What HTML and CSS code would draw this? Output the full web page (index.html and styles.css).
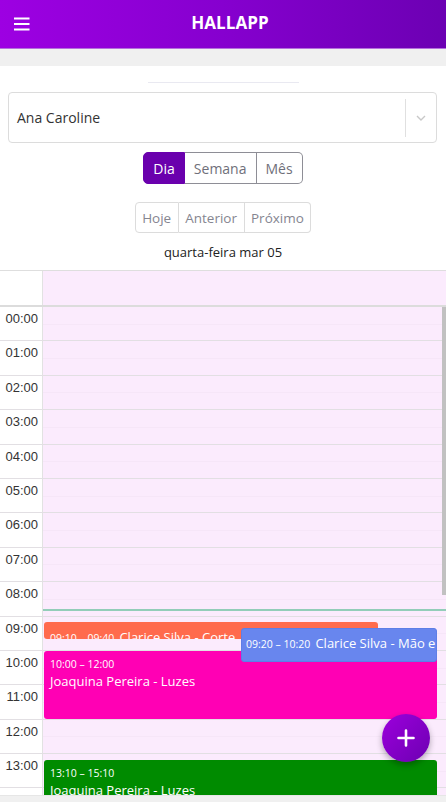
FILE: index.html
```html
<!DOCTYPE html>
<html lang="pt">
<head>
<meta charset="utf-8">
<title>HALLAPP</title>
<link rel="stylesheet" href="styles.css">
</head>
<body>
<div class="app">
  <header class="topbar">
    <button class="menu-btn" aria-label="menu">
      <svg width="16" height="14" viewBox="0 0 16 14"><rect x="0" y="0.5" width="15.5" height="2" fill="#fff"/><rect x="0" y="6" width="15.5" height="2" fill="#fff"/><rect x="0" y="11.5" width="15.5" height="2" fill="#fff"/></svg>
    </button>
    <h1 class="title">HALLAPP</h1>
  </header>
  <div class="gap-band"></div>
  <main class="content">
    <div class="tabs-line"></div>
    <div class="select">
      <span class="select-value">Ana Caroline</span>
      <span class="select-sep"></span>
      <span class="select-arrow"><svg width="10" height="6" viewBox="0 0 10 6"><path d="M1 1 L5 5 L9 1" fill="none" stroke="#c8c8c8" stroke-width="1.4"/></svg></span>
    </div>
    <div class="btn-group view-group">
      <button class="btn active">Dia</button>
      <button class="btn">Semana</button>
      <button class="btn">Mês</button>
    </div>
    <div class="btn-group nav-group">
      <button class="btn">Hoje</button>
      <button class="btn">Anterior</button>
      <button class="btn">Próximo</button>
    </div>
    <div class="date-label">quarta-feira mar 05</div>
    <section class="calendar">
      <div class="allday-row"><div class="axis-cell"></div><div class="allday-cell"></div></div>
      <div class="divider"></div>
      <div class="scroller">
        <div class="timegrid">
          <div class="hour-row"><div class="hour-label">00:00</div><div class="hour-slot"></div></div>
          <div class="hour-row"><div class="hour-label">01:00</div><div class="hour-slot"></div></div>
          <div class="hour-row"><div class="hour-label">02:00</div><div class="hour-slot"></div></div>
          <div class="hour-row"><div class="hour-label">03:00</div><div class="hour-slot"></div></div>
          <div class="hour-row"><div class="hour-label">04:00</div><div class="hour-slot"></div></div>
          <div class="hour-row"><div class="hour-label">05:00</div><div class="hour-slot"></div></div>
          <div class="hour-row"><div class="hour-label">06:00</div><div class="hour-slot"></div></div>
          <div class="hour-row"><div class="hour-label">07:00</div><div class="hour-slot"></div></div>
          <div class="hour-row"><div class="hour-label">08:00</div><div class="hour-slot"></div></div>
          <div class="hour-row"><div class="hour-label">09:00</div><div class="hour-slot"></div></div>
          <div class="hour-row"><div class="hour-label">10:00</div><div class="hour-slot"></div></div>
          <div class="hour-row"><div class="hour-label">11:00</div><div class="hour-slot"></div></div>
          <div class="hour-row"><div class="hour-label">12:00</div><div class="hour-slot"></div></div>
          <div class="hour-row"><div class="hour-label">13:00</div><div class="hour-slot"></div></div>
          <div class="hour-row"><div class="hour-label">14:00</div><div class="hour-slot"></div></div>
          <div class="hour-row"><div class="hour-label">15:00</div><div class="hour-slot"></div></div>
          <div class="hour-row"><div class="hour-label">16:00</div><div class="hour-slot"></div></div>
          <div class="hour-row"><div class="hour-label">17:00</div><div class="hour-slot"></div></div>
          <div class="hour-row"><div class="hour-label">18:00</div><div class="hour-slot"></div></div>
          <div class="hour-row"><div class="hour-label">19:00</div><div class="hour-slot"></div></div>
          <div class="hour-row"><div class="hour-label">20:00</div><div class="hour-slot"></div></div>
          <div class="hour-row"><div class="hour-label">21:00</div><div class="hour-slot"></div></div>
          <div class="hour-row"><div class="hour-label">22:00</div><div class="hour-slot"></div></div>
          <div class="hour-row"><div class="hour-label">23:00</div><div class="hour-slot"></div></div>
          <div class="events-layer">
            <div class="now-line" style="top:302px"></div>
            <div class="event ev-orange is-short" style="top:315.3px;height:16.5px;left:1px;width:334px"><span class="ev-time">09:10 – 09:40</span> <span class="ev-title">Clarice Silva - Corte</span></div>
            <div class="event ev-magenta" style="top:344px;height:68px;left:1px;right:9px"><div class="ev-time">10:00 – 12:00</div><div class="ev-title">Joaquina Pereira - Luzes</div></div>
            <div class="event ev-blue" style="top:321.1px;height:34px;left:198px;right:9px"><span class="ev-time">09:20 – 10:20</span> <span class="ev-title">Clarice Silva - Mão e Pé</span></div>
            <div class="event ev-green" style="top:452.9px;height:68px;left:1px;right:9px"><div class="ev-time">13:10 – 15:10</div><div class="ev-title">Joaquina Pereira - Luzes</div></div>
          </div>
        </div>
      </div>
      <div class="scroll-thumb"></div>
    </section>
  </main>
  <div class="bottom-band"></div>
  <button class="fab" aria-label="adicionar">
    <svg width="18" height="18" viewBox="0 0 18 18"><path d="M9 1.5 V16.5 M1.5 9 H16.5" stroke="#fff" stroke-width="2.6" stroke-linecap="round"/></svg>
  </button>
</div>
</body>
</html>
```
FILE: styles.css
```css
* { box-sizing: border-box; }
html, body { margin: 0; padding: 0; height: 100%; }
body {
  font-family: "Open Sans", "Noto Sans", sans-serif;
  color: #222;
  background: #f0f0f0;
  overflow: hidden;
}
.app {
  height: 100vh;
  display: flex;
  flex-direction: column;
}
.topbar {
  height: 49px;
  flex: none;
  display: flex;
  align-items: center;
  background: linear-gradient(90deg, #9d00e2 0%, #8600cf 50%, #6c00b3 100%);
  border-bottom: 1px solid #b470dc;
}
.menu-btn {
  width: 44px;
  height: 48px;
  border: 0;
  background: none;
  padding: 0 0 0 14px;
  display: flex;
  align-items: center;
  cursor: pointer;
}
.menu-btn svg { display: block; }
.title {
  flex: 1;
  margin: 0 0 3px;
  padding-right: 30px;
  text-align: center;
  color: #fff;
  font-size: 17px;
  line-height: 20px;
  font-weight: 700;
  letter-spacing: 0.1px;
}
.gap-band { height: 17px; flex: none; background: #f0f0f0; }
.content {
  flex: 1;
  min-height: 0;
  background: #fff;
  display: flex;
  flex-direction: column;
}
.tabs-line {
  width: 151px;
  height: 1px;
  margin: 16px auto 0;
  background: #e9e9f1;
  flex: none;
}
.select {
  flex: none;
  margin: 9px 9px 0 8px;
  height: 51px;
  border: 1px solid #dcdcdc;
  border-radius: 4px;
  display: flex;
  align-items: center;
}
.select-value {
  flex: 1;
  padding-left: 8px;
  font-size: 14px;
  color: #333;
}
.select-sep {
  width: 1px;
  height: 38px;
  background: #e0e0e0;
}
.select-arrow {
  width: 30px;
  display: flex;
  justify-content: center;
}
.select-arrow svg { display: block; }
.btn-group {
  flex: none;
  display: flex;
  justify-content: center;
}
.btn {
  font-family: inherit;
  background: #fff;
  margin: 0;
  cursor: pointer;
}
.view-group { margin-top: 9px; }
.view-group .btn {
  height: 32px;
  font-size: 14px;
  color: #6f6f7a;
  border: 1px solid #8e8e96;
  border-left-width: 0;
  padding: 0 9px;
}
.view-group .btn:first-child { border-left-width: 1px; border-radius: 5px 0 0 5px; }
.view-group .btn:last-child { border-radius: 0 5px 5px 0; }
.view-group .btn.active {
  background: #6a00ad;
  border-color: #6a00ad;
  color: #fff;
}
.nav-group { margin-top: 18px; }
.nav-group .btn {
  height: 31px;
  font-size: 13.5px;
  color: #858590;
  border: 1px solid #dcdcdc;
  border-left-width: 0;
  padding: 0 6.5px;
}
.nav-group .btn:first-child { border-left-width: 1px; border-radius: 4px 0 0 4px; }
.nav-group .btn:last-child { border-radius: 0 4px 4px 0; }
.date-label {
  flex: none;
  text-align: center;
  font-size: 13px;
  line-height: 18px;
  margin-top: 10px;
  margin-bottom: 9px;
  color: #222;
}
.calendar {
  position: relative;
  flex: 1;
  min-height: 0;
  display: flex;
  flex-direction: column;
  border-top: 1px solid #dedede;
}
.allday-row {
  flex: none;
  height: 34px;
  display: grid;
  grid-template-columns: 43px 1fr;
}
.axis-cell { border-right: 1px solid #e2e2e2; background: #fff; }
.allday-cell { background: #fbebfd; }
.divider { flex: none; height: 2px; background: #dcdcdc; }
.scroller {
  flex: 1;
  min-height: 0;
  overflow: hidden;
  background: #fbebfd;
}
.scroll-thumb {
  position: absolute;
  right: 0;
  top: 36px;
  width: 4px;
  height: 288px;
  background: #c1c1c1;
}
.timegrid { position: relative; }
.hour-row {
  height: 34.4px;
  display: grid;
  grid-template-columns: 43px 1fr;
  border-bottom: 1px solid #e2dfe3;
}
.hour-label {
  background: #fff;
  border-right: 1px solid #e2e2e2;
  text-align: right;
  padding: 4px 4px 0 0;
  font-family: "Liberation Sans", Arial, sans-serif;
  font-size: 13px;
  line-height: 15px;
  color: #333;
}
.hour-slot {
  position: relative;
  background: #fbebfd;
}
.hour-slot::after {
  content: "";
  position: absolute;
  left: 0;
  right: 0;
  top: 16.7px;
  height: 1px;
  background: #f6e6f8;
}
.events-layer {
  position: absolute;
  left: 43px;
  right: 0;
  top: 0;
  bottom: 0;
}
.now-line {
  position: absolute;
  left: 0;
  right: 0;
  height: 2px;
  background: #93cdb9;
}
.event {
  position: absolute;
  overflow: hidden;
  white-space: nowrap;
  color: #fff;
  border-radius: 3px;
  padding: 5px 6px 3px;
}
.event .ev-time { font-size: 10.5px; line-height: 16px; }
.event .ev-title { font-size: 13px; line-height: 18px; }
.event span.ev-time { margin-right: 1px; }
.event.is-short { padding-top: 3px; }
.ev-orange { background: #ff6b4d; }
.ev-blue { background: #6886ee; border: 1px solid #5e7ee6; padding-top: 2px; padding-left: 4px; }
.ev-magenta { background: #ff00b4; }
.ev-green { background: #008b00; }
.bottom-band { height: 7px; flex: none; background: #f0f0f0; border-top: 1px solid #e6e6e6; }
.fab {
  position: fixed;
  right: 16px;
  bottom: 40px;
  width: 48px;
  height: 48px;
  border: 0;
  border-radius: 50%;
  background: linear-gradient(135deg, #9c00dc 0%, #6c00b2 100%);
  box-shadow: 0 3px 6px rgba(0, 0, 0, 0.3);
  display: flex;
  align-items: center;
  justify-content: center;
  cursor: pointer;
  padding: 0;
}
.fab svg { display: block; }
```
